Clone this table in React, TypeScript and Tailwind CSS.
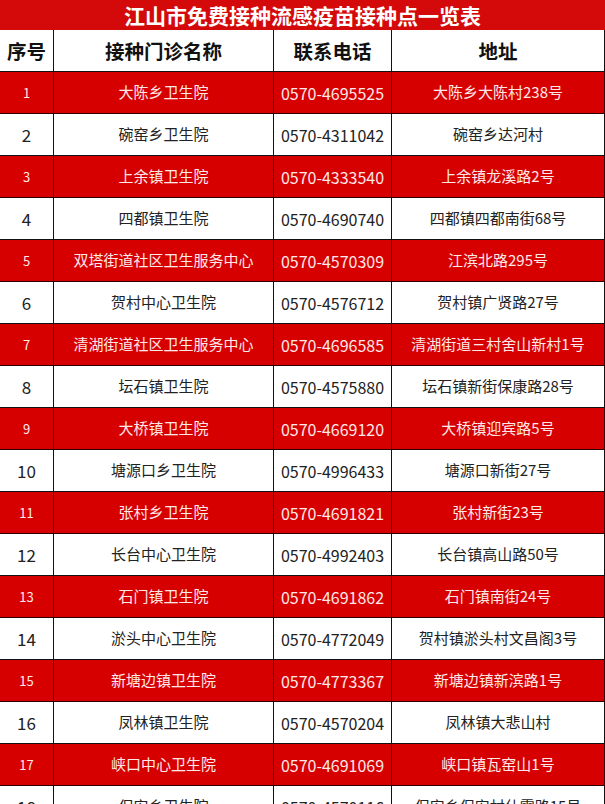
import React from "react";

const rows: [string, string, string, string][] = [
  ["1", "大陈乡卫生院", "0570-4695525", "大陈乡大陈村238号"],
  ["2", "碗窑乡卫生院", "0570-4311042", "碗窑乡达河村"],
  ["3", "上余镇卫生院", "0570-4333540", "上余镇龙溪路2号"],
  ["4", "四都镇卫生院", "0570-4690740", "四都镇四都南街68号"],
  ["5", "双塔街道社区卫生服务中心", "0570-4570309", "江滨北路295号"],
  ["6", "贺村中心卫生院", "0570-4576712", "贺村镇广贤路27号"],
  ["7", "清湖街道社区卫生服务中心", "0570-4696585", "清湖街道三村舍山新村1号"],
  ["8", "坛石镇卫生院", "0570-4575880", "坛石镇新街保康路28号"],
  ["9", "大桥镇卫生院", "0570-4669120", "大桥镇迎宾路5号"],
  ["10", "塘源口乡卫生院", "0570-4996433", "塘源口新街27号"],
  ["11", "张村乡卫生院", "0570-4691821", "张村新街23号"],
  ["12", "长台中心卫生院", "0570-4992403", "长台镇高山路50号"],
  ["13", "石门镇卫生院", "0570-4691862", "石门镇南街24号"],
  ["14", "淤头中心卫生院", "0570-4772049", "贺村镇淤头村文昌阁3号"],
  ["15", "新塘边镇卫生院", "0570-4773367", "新塘边镇新滨路1号"],
  ["16", "凤林镇卫生院", "0570-4570204", "凤林镇大悲山村"],
  ["17", "峡口中心卫生院", "0570-4691069", "峡口镇瓦窑山1号"],
  ["18", "保安乡卫生院", "0570-4570116", "保安乡保安村仕霞路15号"],
];

const font = { fontFamily: '"Noto Sans CJK SC", "Noto Sans", sans-serif' };

export default function App() {
  return (
    <div className="w-[605px] h-[804px] overflow-hidden bg-white" style={font}>
      <div className="h-[30px] bg-[#d40a0a] flex items-center justify-center text-white font-bold text-[21px] leading-none">
        江山市免费接种流感疫苗接种点一览表
      </div>
      <div className="flex h-[42px] border-b border-[#111] bg-white text-[19.5px] font-bold text-[#111]">
        <div className="w-[54px] border-r border-[#111] flex items-center justify-center">序号</div>
        <div className="w-[220px] border-r border-[#111] flex items-center justify-center">接种门诊名称</div>
        <div className="w-[118px] border-r border-[#111] flex items-center justify-center">联系电话</div>
        <div className="w-[213px] border-r border-[#111] flex items-center justify-center">地址</div>
      </div>
      {rows.map((r, i) => {
        const red = i % 2 === 0;
        return (
          <div
            key={r[0]}
            className={
              red
                ? "flex h-[42px] border-b border-[#2a0000] bg-[#d60000] text-[#ffe8e8] text-[15px]"
                : "flex h-[42px] border-b border-[#111] bg-white text-[#222] text-[15px]"
            }
          >
            <div
              className={
                red
                  ? "w-[54px] border-r border-[#3a0000] flex items-center justify-center text-[13px]"
                  : "w-[54px] border-r border-[#111] flex items-center justify-center text-[17px]"
              }
            >
              {r[0]}
            </div>
            <div className={red ? "w-[220px] border-r border-[#3a0000] flex items-center justify-center" : "w-[220px] border-r border-[#111] flex items-center justify-center"}>
              {r[1]}
            </div>
            <div className={red ? "w-[118px] border-r border-[#3a0000] flex items-center justify-center text-[16px]" : "w-[118px] border-r border-[#111] flex items-center justify-center text-[16px]"}>
              {r[2]}
            </div>
            <div className={red ? "w-[213px] border-r border-[#3a0000] flex items-center justify-center" : "w-[213px] border-r border-[#111] flex items-center justify-center"}>
              {r[3]}
            </div>
          </div>
        );
      })}
    </div>
  );
}
